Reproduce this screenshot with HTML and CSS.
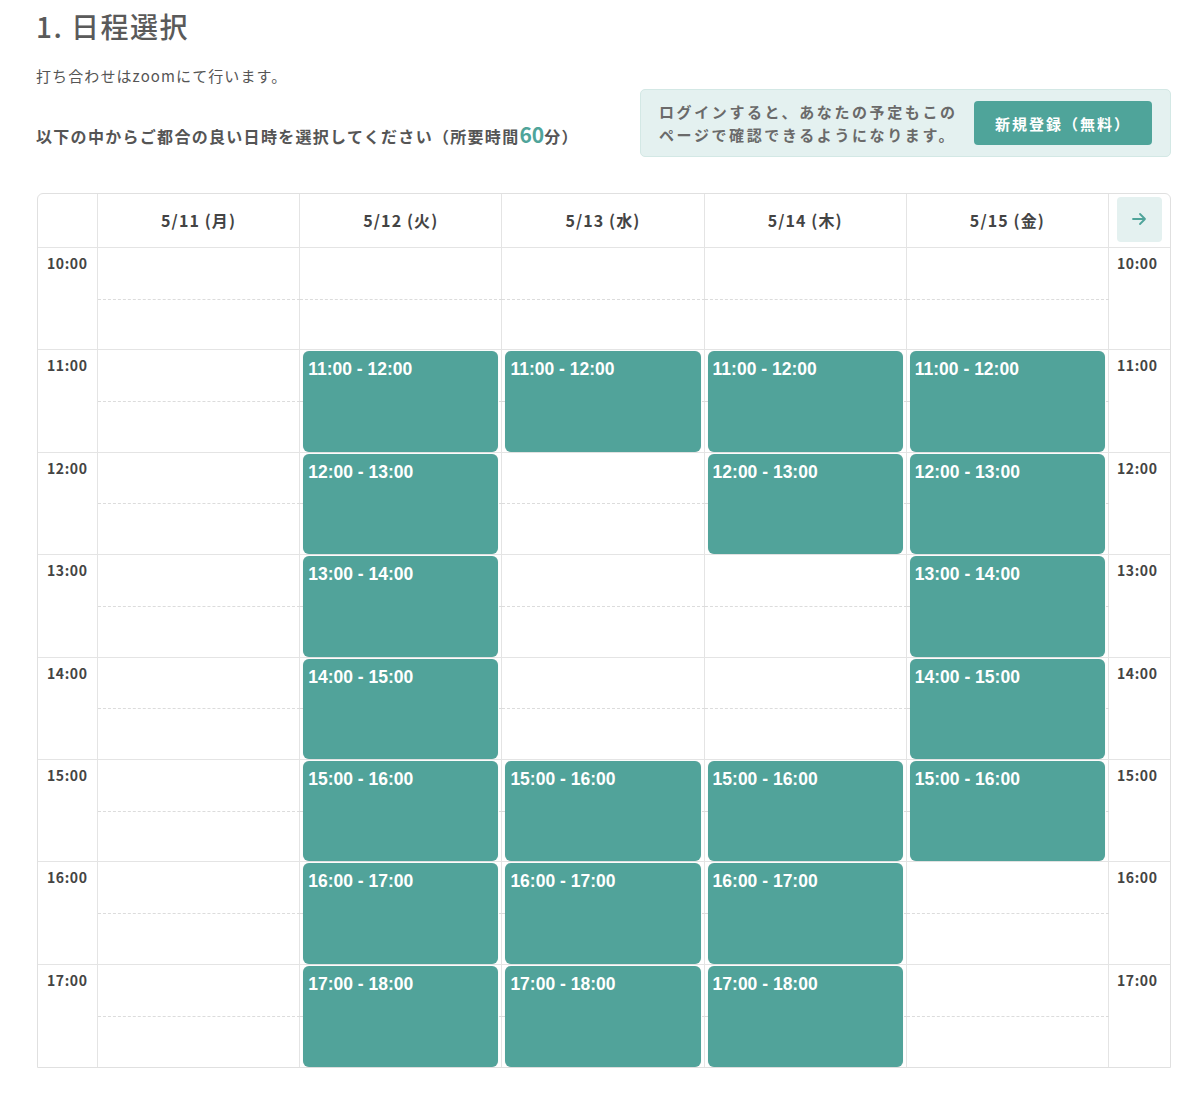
FILE: index.html
```html
<!DOCTYPE html>
<html lang="ja">
<head>
<meta charset="utf-8">
<title>日程選択</title>
<link rel="stylesheet" href="styles.css">
</head>
<body>
<div class="page">
  <h1 class="title">1. 日程選択</h1>
  <p class="note">打ち合わせはzoomにて行います。</p>
  <div class="intro-row">
    <p class="lead">以下の中からご都合の良い日時を選択してください（所要時間<span class="num">60</span>分）</p>
    <div class="login-box">
      <p class="login-text">ログインすると、あなたの予定もこの<br>ページで確認できるようになります。</p>
      <a class="signup" href="#">新規登録（無料）</a>
    </div>
  </div>

  <div class="cal">
    <div class="hd corner"></div>
    <div class="hd day">5/11 (月)</div>
    <div class="hd day">5/12 (火)</div>
    <div class="hd day">5/13 (水)</div>
    <div class="hd day">5/14 (木)</div>
    <div class="hd day">5/15 (金)</div>
    <div class="hd nav"><button class="next" type="button"><svg width="18" height="18" viewBox="0 0 18 18" fill="none" stroke="#4fa49a" stroke-width="1.8" stroke-linecap="round" stroke-linejoin="round"><path d="M3 9h12M10 4l5 5-5 5"/></svg></button></div>

    <!-- 10:00 -->
    <div class="tm">10:00</div>
    <div class="cell"></div><div class="cell"></div><div class="cell"></div><div class="cell"></div><div class="cell"></div>
    <div class="tm right">10:00</div>
    <!-- 11:00 -->
    <div class="tm">11:00</div>
    <div class="cell"></div>
    <div class="cell"><div class="slot">11:00 - 12:00</div></div>
    <div class="cell"><div class="slot">11:00 - 12:00</div></div>
    <div class="cell"><div class="slot">11:00 - 12:00</div></div>
    <div class="cell"><div class="slot">11:00 - 12:00</div></div>
    <div class="tm right">11:00</div>
    <!-- 12:00 -->
    <div class="tm">12:00</div>
    <div class="cell"></div>
    <div class="cell"><div class="slot">12:00 - 13:00</div></div>
    <div class="cell"></div>
    <div class="cell"><div class="slot">12:00 - 13:00</div></div>
    <div class="cell"><div class="slot">12:00 - 13:00</div></div>
    <div class="tm right">12:00</div>
    <!-- 13:00 -->
    <div class="tm">13:00</div>
    <div class="cell"></div>
    <div class="cell"><div class="slot">13:00 - 14:00</div></div>
    <div class="cell"></div>
    <div class="cell"></div>
    <div class="cell"><div class="slot">13:00 - 14:00</div></div>
    <div class="tm right">13:00</div>
    <!-- 14:00 -->
    <div class="tm">14:00</div>
    <div class="cell"></div>
    <div class="cell"><div class="slot">14:00 - 15:00</div></div>
    <div class="cell"></div>
    <div class="cell"></div>
    <div class="cell"><div class="slot">14:00 - 15:00</div></div>
    <div class="tm right">14:00</div>
    <!-- 15:00 -->
    <div class="tm">15:00</div>
    <div class="cell"></div>
    <div class="cell"><div class="slot">15:00 - 16:00</div></div>
    <div class="cell"><div class="slot">15:00 - 16:00</div></div>
    <div class="cell"><div class="slot">15:00 - 16:00</div></div>
    <div class="cell"><div class="slot">15:00 - 16:00</div></div>
    <div class="tm right">15:00</div>
    <!-- 16:00 -->
    <div class="tm">16:00</div>
    <div class="cell"></div>
    <div class="cell"><div class="slot">16:00 - 17:00</div></div>
    <div class="cell"><div class="slot">16:00 - 17:00</div></div>
    <div class="cell"><div class="slot">16:00 - 17:00</div></div>
    <div class="cell"></div>
    <div class="tm right">16:00</div>
    <!-- 17:00 -->
    <div class="tm last">17:00</div>
    <div class="cell last"></div>
    <div class="cell last"><div class="slot">17:00 - 18:00</div></div>
    <div class="cell last"><div class="slot">17:00 - 18:00</div></div>
    <div class="cell last"><div class="slot">17:00 - 18:00</div></div>
    <div class="cell last"></div>
    <div class="tm right last">17:00</div>
  </div>
</div>
</body>
</html>
```

FILE: styles.css
```css
* { box-sizing: border-box; }

body {
  margin: 0;
  background: #ffffff;
  font-family: "Noto Sans CJK JP", "Noto Sans", sans-serif;
  color: #555555;
}

.page {
  padding: 0 29px 0 36px;
}

.title {
  margin: 0;
  padding-top: 6px;
  font-size: 28px;
  line-height: 40px;
  font-weight: 500;
  color: #5a5a5a;
  letter-spacing: 1.5px;
}

.note {
  margin: 19px 0 0;
  font-size: 15px;
  line-height: 22px;
  color: #555555;
  letter-spacing: 1.1px;
}

.intro-row {
  display: flex;
  justify-content: space-between;
  align-items: flex-start;
  margin-top: 2px;
}

.lead {
  margin: 33px 0 0;
  font-size: 16px;
  line-height: 24px;
  font-weight: 700;
  color: #555555;
  letter-spacing: 1.3px;
}

.lead .num {
  font-size: 21px;
  color: #4fa49a;
  letter-spacing: 0;
}

.login-box {
  width: 531px;
  height: 68px;
  display: flex;
  align-items: center;
  justify-content: space-between;
  padding: 0 18px 0 18px;
  background: #e4f1f0;
  border: 1px solid #d3e8e5;
  border-radius: 5px;
}

.login-text {
  margin: 0;
  font-size: 15px;
  line-height: 23px;
  font-weight: 700;
  color: #6a6a6a;
  letter-spacing: 2.6px;
}

.signup {
  display: flex;
  align-items: center;
  justify-content: center;
  width: 178px;
  height: 44px;
  background: #4fa49a;
  border-radius: 4px;
  color: #ffffff;
  font-size: 15px;
  font-weight: 700;
  text-decoration: none;
  letter-spacing: 2px;
}

.cal {
  display: grid;
  grid-template-columns: 60px repeat(5, 1fr) 61px;
  grid-template-rows: 54px repeat(8, 102.4px);
  width: 1134px;
  margin: 36px 0 0 1px;
  border: 1px solid #e0e0e0;
  border-radius: 6px 6px 0 0;
}

.hd {
  border-right: 1px solid #e4e4e4;
  border-bottom: 1px solid #e4e4e4;
  display: flex;
  align-items: center;
  justify-content: center;
}

.day {
  font-size: 16px;
  font-weight: 700;
  color: #444444;
  letter-spacing: 1.1px;
  padding-bottom: 2px;
}

.nav {
  border-right: none;
  padding: 3px 7px 6px 7px;
}

.next {
  width: 45px;
  height: 45px;
  border: none;
  border-radius: 4px;
  background: #e4f1f0;
  display: flex;
  align-items: center;
  justify-content: center;
  padding: 0;
}

.tm {
  border-right: 1px solid #e4e4e4;
  border-bottom: 1px solid #e4e4e4;
  font-size: 14px;
  font-weight: 700;
  color: #444444;
  padding: 6px 0 0 9px;
  line-height: 18px;
  letter-spacing: 0.6px;
}

.tm.right {
  border-right: none;
  padding-left: 8px;
}

.cell {
  position: relative;
  border-right: 1px solid #e4e4e4;
  border-bottom: 1px solid #e4e4e4;
  padding: 1px 3px 0 3px;
}

.cell::before {
  content: "";
  position: absolute;
  left: 0;
  right: -1px;
  top: 50%;
  border-top: 1px dashed #dcdcdc;
}

.last {
  border-bottom: none;
}

.slot {
  position: relative;
  height: 100%;
  background: #51a39a;
  border-radius: 6px;
  color: #ffffff;
  font-family: "Liberation Sans", Arial, sans-serif;
  font-size: 17.5px;
  font-weight: 700;
  padding: 8px 0 0 5px;
  line-height: 20px;
  box-shadow: 0 0 1px rgba(0, 0, 0, 0.15);
}
```
